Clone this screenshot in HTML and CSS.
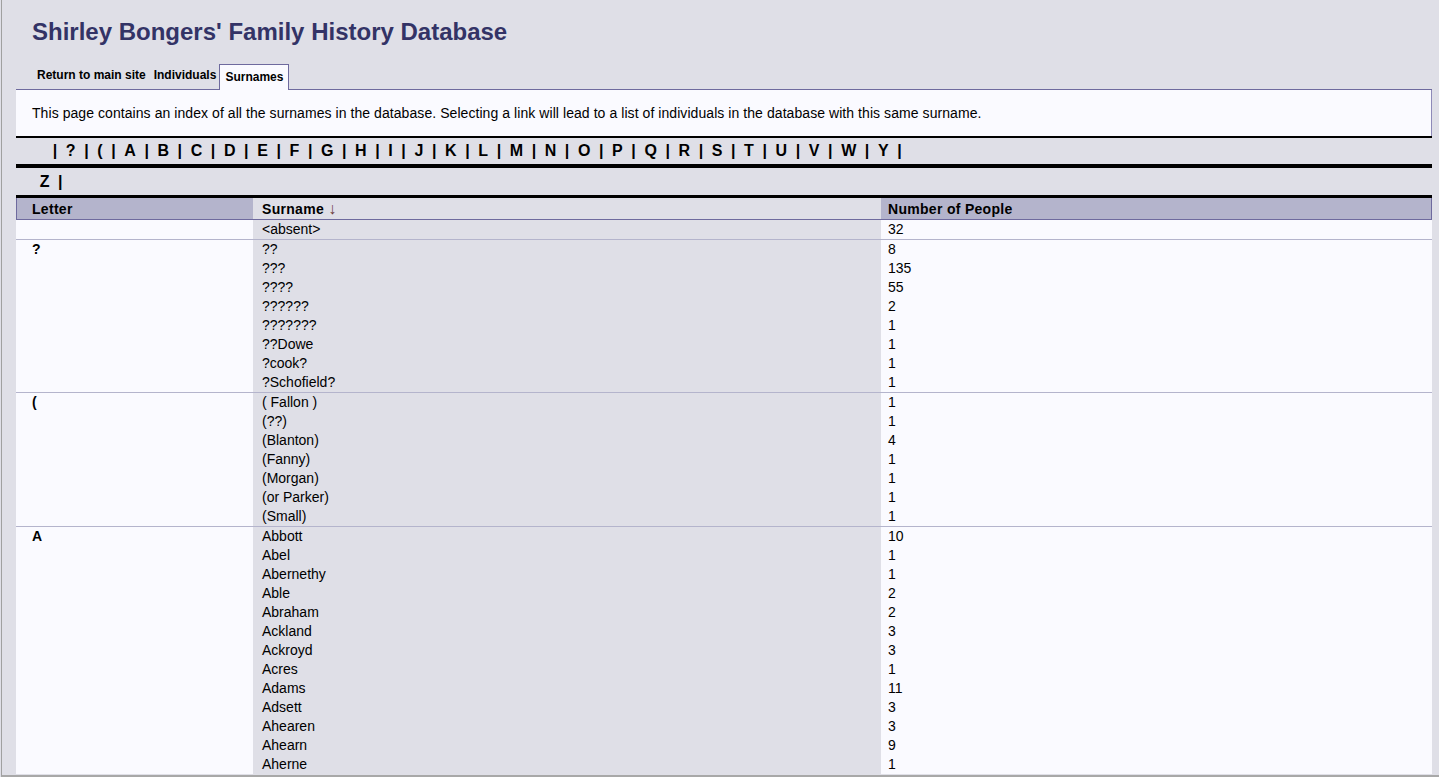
FILE: index.html
```html
<!DOCTYPE html>
<html lang="en">
<head>
<meta charset="utf-8">
<title>Shirley Bongers' Family History Database - Surnames</title>
<link rel="stylesheet" href="styles.css">
</head>
<body>
<div class="frame">
  <h1 class="site-title">Shirley Bongers' Family History Database</h1>
  <nav class="tabs">
    <a class="tab" href="#">Return to main site</a>
    <a class="tab" href="#">Individuals</a>
    <a class="tab tab-active" href="#">Surnames</a>
  </nav>
  <div class="panel">
    <p class="intro">This page contains an index of all the surnames in the database. Selecting a link will lead to a list of individuals in the database with this same surname.</p>
    <div class="alpha">
      <div class="alpha-row alpha-row-first">
        <span class="sep">|</span><a href="#">?</a><span class="sep">|</span><a href="#">(</a><span class="sep">|</span><a href="#">A</a><span class="sep">|</span><a href="#">B</a><span class="sep">|</span><a href="#">C</a><span class="sep">|</span><a href="#">D</a><span class="sep">|</span><a href="#">E</a><span class="sep">|</span><a href="#">F</a><span class="sep">|</span><a href="#">G</a><span class="sep">|</span><a href="#">H</a><span class="sep">|</span><a href="#">I</a><span class="sep">|</span><a href="#">J</a><span class="sep">|</span><a href="#">K</a><span class="sep">|</span><a href="#">L</a><span class="sep">|</span><a href="#">M</a><span class="sep">|</span><a href="#">N</a><span class="sep">|</span><a href="#">O</a><span class="sep">|</span><a href="#">P</a><span class="sep">|</span><a href="#">Q</a><span class="sep">|</span><a href="#">R</a><span class="sep">|</span><a href="#">S</a><span class="sep">|</span><a href="#">T</a><span class="sep">|</span><a href="#">U</a><span class="sep">|</span><a href="#">V</a><span class="sep">|</span><a href="#">W</a><span class="sep">|</span><a href="#">Y</a><span class="sep">|</span>
      </div>
      <div class="alpha-row alpha-row-second">
        <a href="#">Z</a><span class="sep">|</span>
      </div>
    </div>
    <table class="surnames">
      <colgroup>
        <col class="c-letter">
        <col class="c-surname">
        <col class="c-count">
      </colgroup>
      <thead>
        <tr>
          <th class="th-letter">Letter</th>
          <th class="th-surname">Surname <span class="sort-arrow">↓</span></th>
          <th class="th-count">Number of People</th>
        </tr>
      </thead>
      <tbody class="group">
        <tr><td class="letter"></td><td class="surname">&lt;absent&gt;</td><td class="count">32</td></tr>
      </tbody>
      <tbody class="group">
        <tr><td class="letter" rowspan="8">?</td><td class="surname">??</td><td class="count">8</td></tr>
        <tr><td class="surname">???</td><td class="count">135</td></tr>
        <tr><td class="surname">????</td><td class="count">55</td></tr>
        <tr><td class="surname">??????</td><td class="count">2</td></tr>
        <tr><td class="surname">???????</td><td class="count">1</td></tr>
        <tr><td class="surname">??Dowe</td><td class="count">1</td></tr>
        <tr><td class="surname">?cook?</td><td class="count">1</td></tr>
        <tr><td class="surname">?Schofield?</td><td class="count">1</td></tr>
      </tbody>
      <tbody class="group">
        <tr><td class="letter" rowspan="7">(</td><td class="surname">( Fallon )</td><td class="count">1</td></tr>
        <tr><td class="surname">(??)</td><td class="count">1</td></tr>
        <tr><td class="surname">(Blanton)</td><td class="count">4</td></tr>
        <tr><td class="surname">(Fanny)</td><td class="count">1</td></tr>
        <tr><td class="surname">(Morgan)</td><td class="count">1</td></tr>
        <tr><td class="surname">(or Parker)</td><td class="count">1</td></tr>
        <tr><td class="surname">(Small)</td><td class="count">1</td></tr>
      </tbody>
      <tbody class="group group-continues">
        <tr><td class="letter" rowspan="13">A</td><td class="surname">Abbott</td><td class="count">10</td></tr>
        <tr><td class="surname">Abel</td><td class="count">1</td></tr>
        <tr><td class="surname">Abernethy</td><td class="count">1</td></tr>
        <tr><td class="surname">Able</td><td class="count">2</td></tr>
        <tr><td class="surname">Abraham</td><td class="count">2</td></tr>
        <tr><td class="surname">Ackland</td><td class="count">3</td></tr>
        <tr><td class="surname">Ackroyd</td><td class="count">3</td></tr>
        <tr><td class="surname">Acres</td><td class="count">1</td></tr>
        <tr><td class="surname">Adams</td><td class="count">11</td></tr>
        <tr><td class="surname">Adsett</td><td class="count">3</td></tr>
        <tr><td class="surname">Ahearen</td><td class="count">3</td></tr>
        <tr><td class="surname">Ahearn</td><td class="count">9</td></tr>
        <tr><td class="surname">Aherne</td><td class="count">1</td></tr>
      </tbody>
    </table>
  </div>
</div>
</body>
</html>
```

FILE: styles.css
```css
html, body {
  margin: 0;
  padding: 0;
}

body {
  background: #dfdfe7;
  color: #000;
  font-family: "Liberation Sans", Arial, sans-serif;
  overflow: hidden;
}

a {
  color: #000;
  text-decoration: none;
}

.frame {
  margin-left: 1px;
  border-left: 1px solid #a0a0a0;
  border-bottom: 2px solid #a8a8a8;
  height: 775px;
  overflow: hidden;
}

.site-title {
  margin: 0 0 17px 0;
  padding: 18px 0 0 30px;
  font-size: 24px;
  line-height: 28px;
  font-weight: bold;
  color: #333366;
}

.tabs {
  display: flex;
  align-items: flex-end;
  height: 26px;
  padding-left: 31px;
}

.tab {
  font-size: 12px;
  font-weight: bold;
  line-height: 23px;
  padding: 0 4px 2px 4px;
}

.tab-active {
  background: #fafaff;
  border: 1px solid #6e6a9e;
  border-bottom: none;
  line-height: 25px;
  padding: 0 5px 0 5px;
  margin-left: -1px;
  position: relative;
  top: 1px;
}

.panel {
  margin: 0 7px 0 14px;
  border-top: 1px solid #6e6a9e;
}

.intro {
  margin: 0;
  padding: 15px 16px 14px 16px;
  background: #fafaff;
  border-right: 1px solid #8e8ab8;
  font-size: 14px;
  line-height: 17px;
  letter-spacing: 0.065px;
}

.alpha {
  border-top: 2px solid #000;
  border-bottom: 3px solid #000;
}

.alpha-row {
  display: flex;
  column-gap: 8.6px;
  font-size: 16px;
  font-weight: bold;
  line-height: 26px;
}

.alpha-row-first {
  padding-left: 36.7px;
  border-bottom: 4px solid #000;
}

.alpha-row-second {
  padding-left: 23.7px;
  padding-top: 1px;
}

.surnames {
  width: 100%;
  table-layout: fixed;
  border-collapse: separate;
  border-spacing: 0;
  font-size: 14px;
}

.c-letter { width: 237px; }
.c-surname { width: 628px; }

.surnames th {
  text-align: left;
  font-weight: bold;
  line-height: 20px;
  padding-top: 1px;
  padding-bottom: 0;
  background: #b4b4cc;
  border-bottom: 1px solid #6e6a9e;
  letter-spacing: 0.3px;
}

.th-letter {
  border-left: 1px solid #6e6a9e;
  padding-left: 15px;
}

.th-surname {
  padding-left: 9px;
  background: #dfdfe7 !important;
}

.th-count {
  padding-left: 7px;
  border-right: 1px solid #6e6a9e;
}

.sort-arrow {
  font-weight: normal;
  font-size: 16px;
  line-height: 16px;
  color: #6e3e3e;
}

.surnames td {
  padding: 0;
  line-height: 19px;
  height: 19px;
  vertical-align: top;
  white-space: pre;
}

.letter {
  background: #fafaff;
  font-weight: bold;
  padding-left: 16px !important;
}

.surname {
  background: #dfdfe7;
  padding-left: 9px !important;
}

.count {
  background: #fafaff;
  padding-left: 7px !important;
}

.group tr:last-child td,
.group td.letter {
  border-bottom: 1px solid #b4b4cc;
}

.group-continues tr:last-child td,
.group-continues td.letter {
  border-bottom: none;
}
```
